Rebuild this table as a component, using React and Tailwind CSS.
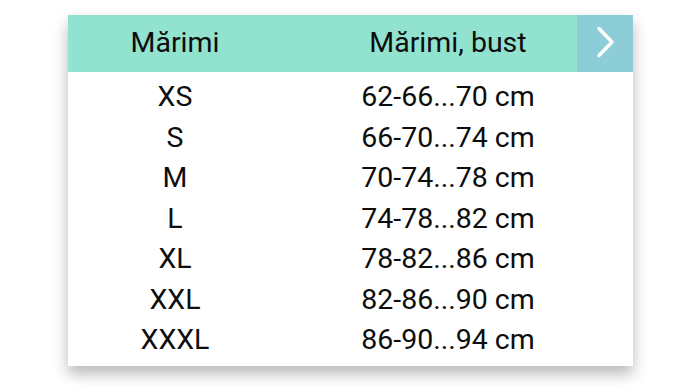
import React from 'react';

const rows = [
  ['XS', '62-66...70 cm'],
  ['S', '66-70...74 cm'],
  ['M', '70-74...78 cm'],
  ['L', '74-78...82 cm'],
  ['XL', '78-82...86 cm'],
  ['XXL', '82-86...90 cm'],
  ['XXXL', '86-90...94 cm'],
];

export default function App() {
  return (
    <div className="w-[700px] h-[385px] bg-white pt-[15px] pl-[68px] font-['Roboto',sans-serif] text-[#0d0d0d] text-[28.5px]">
      <div className="relative w-[565px] bg-white shadow-[0_8px_14px_rgba(0,0,0,0.28)]">
        <div className="grid grid-cols-[214px_332px] h-[57px] bg-[#92e2d0] items-center">
          <div className="text-center leading-none">Mărimi</div>
          <div className="text-center leading-none">Mărimi, bust</div>
        </div>
        <div className="absolute right-0 top-0 w-[56px] h-[57px] bg-[#8dcdd7] flex items-center justify-center">
          <svg width="20" height="32" viewBox="0 0 20 32" fill="none" className="-mt-[3px] ml-[1px]">
            <path d="M3 2.5 L16 16 L3 29.5" stroke="white" strokeWidth="3.4" strokeLinecap="round" strokeLinejoin="round" />
          </svg>
        </div>
        <div className="py-[5px]">
          {rows.map(([s, b]) => (
            <div key={s} className="grid grid-cols-[214px_332px] h-[40.5px] items-center">
              <div className="text-center leading-none">{s}</div>
              <div className="text-center leading-none">{b}</div>
            </div>
          ))}
        </div>
      </div>
    </div>
  );
}
